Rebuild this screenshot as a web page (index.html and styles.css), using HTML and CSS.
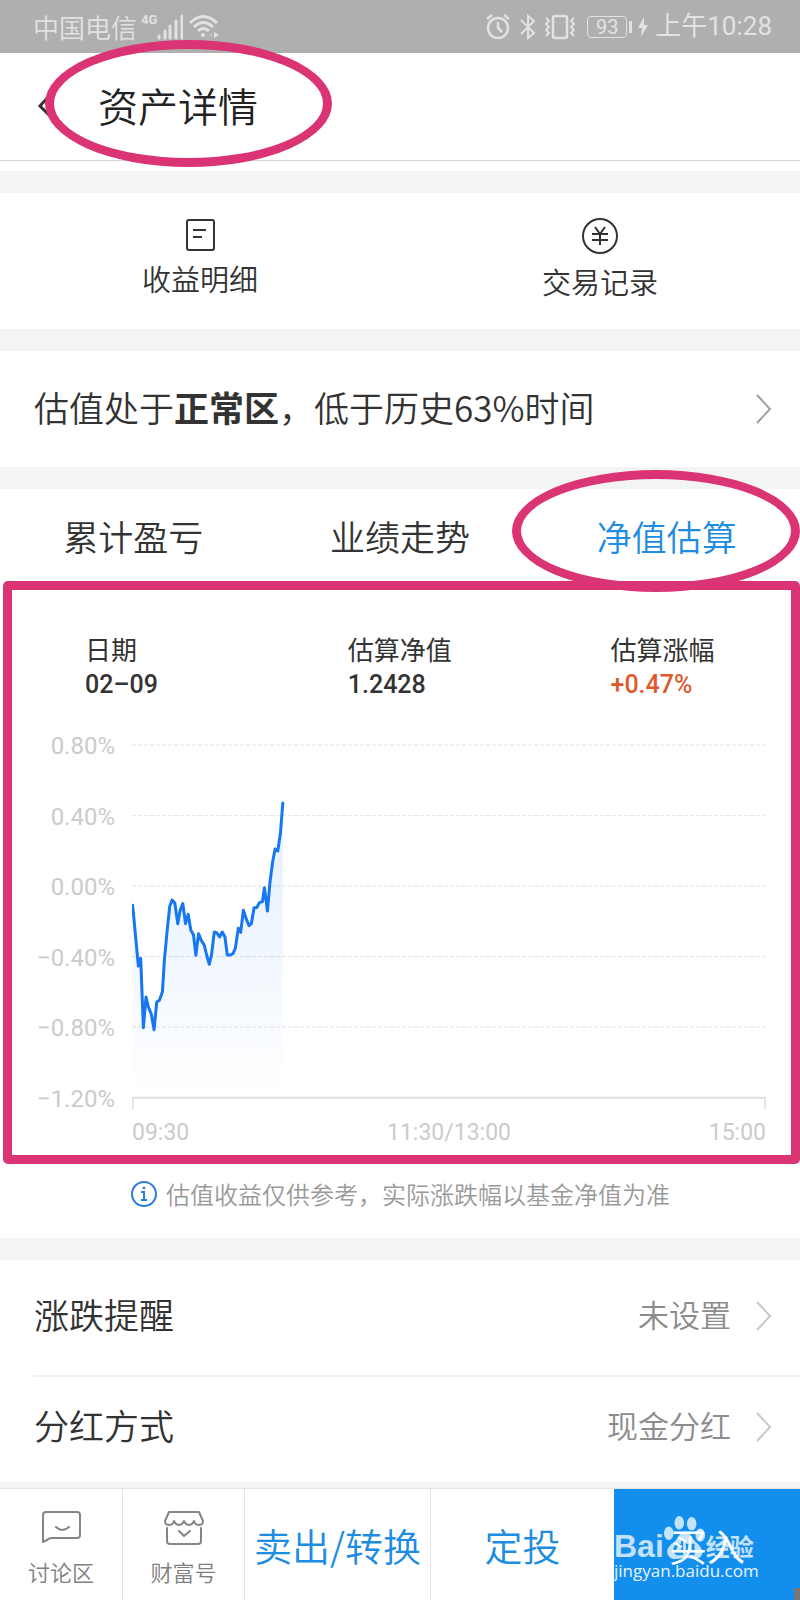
FILE: index.html
```html
<!DOCTYPE html>
<html lang="zh-CN">
<head>
<meta charset="utf-8">
<meta name="viewport" content="width=device-width, initial-scale=1">
<title>资产详情</title>
<link rel="stylesheet" href="styles.css">
</head>
<body>
<div class="status">
  <div class="status-group">
    <span class="carrier">中国电信</span>
    <span class="network">4G</span>
    <svg class="signal" width="26" height="26" viewBox="0 0 26 26" stroke="currentColor" stroke-width="3" stroke-linecap="round"><path d="M2 22v2M8 17v7M13 12v12M19 7v17M25 2v22"/></svg>
    <svg class="wifi" width="30" height="26" viewBox="0 0 30 26" fill="none" stroke="currentColor" stroke-width="3"><path d="M1 9Q14 -4 28 9M5 13Q14 4 24 13M9 17Q14 12 20 17"/><circle cx="14" cy="21" r="2" fill="currentColor" stroke="none"/><path d="M25 18v6l5-3z" fill="currentColor" stroke="none"/><path d="M23 19v4l-3-2z" fill="#c6c6c6" stroke="none"/></svg>
  </div>
  <div class="status-group">
    <svg class="alarm" width="24" height="26" viewBox="0 0 24 26" fill="none" stroke="currentColor" stroke-width="2.5"><circle cx="12" cy="14" r="10"/><path d="M1 5l5-4M23 5l-5-4M12 8v6l4 4"/></svg>
    <svg class="bluetooth" width="16" height="26" viewBox="0 0 16 26" fill="none" stroke="currentColor" stroke-width="2"><path d="M1 6l13 13-6 5V2l6 5L1 20"/></svg>
    <svg class="vibrate" width="32" height="26" viewBox="0 0 32 26" fill="none" stroke="currentColor" stroke-width="2.5"><rect x="9" y="2" width="14" height="22" rx="2"/><path stroke-width="2" d="M2 4l3 3-3 3 3 3-3 3 3 3-3 3M30 4l-3 3 3 3-3 3 3 3-3 3 3 3"/></svg>
    <span class="battery">93</span>
    <span class="battery-tip"></span>
    <svg class="bolt" width="10" height="22" viewBox="0 0 10 22" fill="currentColor"><path d="M6 1L0 12h4L3 21l7-12H6z"/></svg>
    <span class="clock">上午10:28</span>
  </div>
</div>

<header class="header">
  <button class="back" type="button" aria-label="返回"><svg width="18" height="28" viewBox="0 0 18 28" fill="none" stroke="#333" stroke-width="3"><path d="M15 3L4 15l11 11"/></svg></button>
  <h1 class="title">资产详情</h1>
  <span class="mark mark-title"></span>
</header>

<nav class="shortcuts">
  <a class="shortcut" href="#income">
    <svg width="36" height="36" viewBox="0 0 36 36" fill="none" stroke="#333" stroke-width="2"><rect x="5" y="2" width="27" height="30" rx="2"/><path d="M11 12h13M11 19h9"/></svg>
    <span>收益明细</span>
  </a>
  <a class="shortcut shortcut-low" href="#records">
    <svg width="36" height="36" viewBox="0 0 36 36" fill="none" stroke="#333" stroke-width="2"><circle cx="18" cy="18" r="17"/><path d="M13 9l5 7 5-7M10 16h16M10 22h16M18 16v11"/></svg>
    <span>交易记录</span>
  </a>
</nav>

<a class="row row-valuation" href="#valuation">
  <span class="label">估值处于<b>正常区</b>，低于历史63%时间</span>
  <svg class="chevron chevron-dark" width="18" height="30" viewBox="0 0 18 30"><path d="M2 1l13 14L2 29"/></svg>
</a>

<section class="estimate">
  <div class="tabs" role="tablist">
    <button class="tab" type="button" role="tab">累计盈亏</button>
    <button class="tab" type="button" role="tab">业绩走势</button>
    <button class="tab tab-active" type="button" role="tab" aria-selected="true">净值估算<span class="mark mark-tab"></span></button>
  </div>
  <div class="panel">
    <dl class="facts">
      <div><dt>日期</dt><dd>02–09</dd></div>
      <div><dt>估算净值</dt><dd>1.2428</dd></div>
      <div><dt>估算涨幅</dt><dd class="up">+0.47%</dd></div>
    </dl>
    <div class="chart">
      <div class="y-axis"><span>0.80%</span><span>0.40%</span><span>0.00%</span><span>−0.40%</span><span>−0.80%</span><span>−1.20%</span></div>
      <svg class="plot" viewBox="0 0 1896 1098" preserveAspectRatio="none" fill="none">
        <defs><linearGradient id="fade" x1="0" y1="0" x2="0" y2="1"><stop offset="0" stop-color="#1677f0" stop-opacity=".12"/><stop offset="1" stop-color="#1677f0" stop-opacity="0"/></linearGradient></defs>
        <path class="grid" d="M0 3H1893M0 215H1893M0 426H1893M0 638H1893M0 849H1893"/>
        <path class="axis" d="M2 1095V1061H1894V1095"/>
        <g transform="translate(-96 111)">
          <path fill="url(#fade)" d="M98 373L115 555 122 532 130 740 138 648 145 678 154 700 162 746 170 663 178 658 187 632 193 535 202 440 209 375 216 357 224 366 233 428 240 388 248 368 256 428 264 400 272 448 280 462 287 523 295 458 303 478 312 492 320 525 327 550 334 520 342 453 350 456 358 468 366 453 374 468 381 522 390 522 398 518 405 502 414 442 421 454 429 388 437 412 446 434 453 428 461 380 469 380 477 365 486 362 492 320 501 390 509 300 517 240 524 204 532 210 540 155 547 66V948H98Z"/>
          <path class="line" d="M98 373L115 555 122 532 130 740 138 648 145 678 154 700 162 746 170 663 178 658 187 632 193 535 202 440 209 375 216 357 224 366 233 428 240 388 248 368 256 428 264 400 272 448 280 462 287 523 295 458 303 478 312 492 320 525 327 550 334 520 342 453 350 456 358 468 366 453 374 468 381 522 390 522 398 518 405 502 414 442 421 454 429 388 437 412 446 434 453 428 461 380 469 380 477 365 486 362 492 320 501 390 509 300 517 240 524 204 532 210 540 155 547 66"/>
        </g>
      </svg>
      <div class="x-axis"><span>09:30</span><span>11:30/13:00</span><span>15:00</span></div>
    </div>
  </div>
  <p class="note">
    <svg width="28" height="28" viewBox="0 0 28 28" fill="none" stroke="#2b7de0" stroke-width="2"><circle cx="14" cy="14" r="12"/><path d="M11 12h3v8M11 20h6"/><circle cx="14" cy="8" r="1" fill="#2b7de0" stroke-width="1"/></svg>
    <span>估值收益仅供参考，实际涨跌幅以基金净值为准</span>
  </p>
</section>

<div class="settings">
  <a class="row" href="#alert">
    <span class="label">涨跌提醒</span><span class="value">未设置</span>
    <svg class="chevron" width="18" height="30" viewBox="0 0 18 30"><path d="M2 1l13 14L2 29"/></svg>
  </a>
  <a class="row" href="#dividend">
    <span class="label">分红方式</span><span class="value">现金分红</span>
    <svg class="chevron" width="18" height="30" viewBox="0 0 18 30"><path d="M2 1l13 14L2 29"/></svg>
  </a>
</div>

<footer class="actions">
  <a class="action action-small" href="#forum">
    <svg width="40" height="36" viewBox="0 0 40 36" fill="none" stroke="#858585" stroke-width="2" stroke-linejoin="round" stroke-linecap="round"><path d="M2 33V6q0-3 3-3h31q3 0 3 3v20q0 3-3 3H11q-3 0-5 2zM15 18q6 6 13 0"/></svg>
    <span>讨论区</span>
  </a>
  <a class="action action-small" href="#wealth">
    <svg width="40" height="36" viewBox="0 0 40 36" fill="none" stroke="#858585" stroke-width="2" stroke-linejoin="round" stroke-linecap="round"><path d="M5 3h30l4 9q0 4-4 4-4 0-5-4-2 4-5 4t-5-4q-2 4-5 4t-5-4q-1 4-5 4-4 0-4-4zM3 19v13q0 3 3 3h28q3 0 3-3V19M15 22l5 5 6-5"/></svg>
    <span>财富号</span>
  </a>
  <button class="action action-main" type="button">卖出/转换</button>
  <button class="action action-main" type="button">定投</button>
  <button class="action action-main action-buy" type="button">买入
    <span class="watermark">
      <span class="brand"><span class="brand-bai">Bai</span><svg width="42" height="46" viewBox="0 0 44 48" fill="currentColor"><ellipse cx="5" cy="19" rx="5" ry="7"/><ellipse cx="16" cy="8" rx="5" ry="7"/><ellipse cx="29" cy="9" rx="5" ry="7"/><ellipse cx="38" cy="21" rx="5" ry="7"/><path fill-rule="evenodd" d="M22 18c-6 0-7 6-11 10-6 4-10 9-6 15 4 5 11 2 17 2s12 3 16-1c5-5 1-11-5-16-4-4-5-10-11-10zM14 30h4v-3h2v15h-6q-4-1-4-6t4-6zm1 3q-2 0-2 3t2 3h3v-6zM23 30h3v8h3v-8h3v12h-6q-3 0-3-3z"/></svg><span class="brand-jingyan">经验</span></span>
      <span class="site">jingyan.baidu.com</span>
    </span>
    <span class="corner"></span>
  </button>
</footer>
</body>
</html>
```
FILE: styles.css
```css
* { box-sizing: border-box; }

body {
  margin: 0;
  background: #f4f4f4;
  color: #333;
  font-family: "Noto Sans CJK SC", sans-serif;
  font-weight: 350;
}

a { color: inherit; text-decoration: none; }

button {
  border: 0;
  padding: 0;
  background: none;
  color: inherit;
  font: inherit;
}

svg { display: block; flex: none; }

.status {
  display: flex;
  justify-content: space-between;
  height: 53px;
  padding: 0 28px 0 33px;
  background: #afafaf;
  color: #e2e2e2;
  font-size: 26px;
  line-height: 53px;
}

.status-group { display: flex; align-items: center; }
.network { margin: 0 0 14px 4px; font: bold 13px/14px Roboto, sans-serif; }
.wifi { margin-left: 6px; }
.bluetooth { margin-left: 10px; }
.vibrate { margin-left: 8px; }

.battery {
  width: 40px;
  margin-left: 11px;
  border: 1px solid currentColor;
  border-radius: 4px;
  font: 20px/20px Roboto, sans-serif;
  text-align: center;
}

.battery-tip { width: 3px; height: 12px; margin-left: 2px; background: currentColor; }
.bolt { margin-left: 6px; }
.clock { margin-left: 7px; font-family: Roboto, "Noto Sans CJK SC", sans-serif; font-weight: 400; }

.header {
  position: relative;
  display: flex;
  align-items: center;
  height: 118px;
  padding: 0 36px 15px;
  background: linear-gradient(#d4d4d4, #d4d4d4) 0 107px / 100% 1px no-repeat #fff;
}

.title {
  margin: 0 0 0 44px;
  color: #222;
  font-size: 40px;
  font-weight: 350;
  line-height: 60px;
}

.mark { position: absolute; border: 9px solid #db3474; border-radius: 50%; }
.mark-title { top: -13px; left: 45px; width: 287px; height: 127px; }
.mark-tab { z-index: 1; top: -19px; right: 0; bottom: -11px; left: -21px; }

.shortcuts { display: flex; margin-top: 22px; background: #fff; }

.shortcut {
  display: flex;
  flex: 1;
  flex-direction: column;
  align-items: center;
  gap: 4px;
  height: 136px;
  padding-top: 25px;
  font-size: 29px;
  line-height: 40px;
}

.shortcut-low { gap: 7px; }

.row {
  display: flex;
  align-items: center;
  height: 115px;
  padding: 0 27px 3px 34px;
  background: #fff;
}

.row-valuation { height: 116px; margin-top: 22px; padding-bottom: 0; }
.label { flex: 1; padding-bottom: 4px; font-size: 35px; line-height: 52px; }
.value { margin-right: 24px; padding-bottom: 4px; color: #8c8c8c; font-size: 31px; line-height: 46px; }
.chevron { fill: none; stroke: #c8c8c8; stroke-width: 2; }
.chevron-dark { stroke: #a0a0a0; }

.estimate { margin-top: 22px; background: #fff; }
.tabs { display: grid; grid-template-columns: repeat(3, 1fr); }
.tab { position: relative; height: 92px; padding-top: 2px; font-size: 35px; line-height: 52px; }
.tab-active { color: #1e8ce0; }

.panel {
  margin-left: 3px;
  padding: 41px 25px 8px 14px;
  border: 9px solid #db3474;
  border-radius: 5px;
}

.facts {
  display: grid;
  grid-template-columns: 262fr 262fr 155fr;
  margin: 0 0 41px 59px;
  font-size: 26px;
  font-weight: 400;
  line-height: 36px;
}

.facts dd { margin: 0; font-family: Roboto, sans-serif; font-weight: 500; font-size: 25px; }
.facts .up { color: #e0592a; }

.chart {
  display: grid;
  grid-template-columns: 89px 1fr;
  column-gap: 17px;
  color: #cbcbcb;
  font: 23px/28px Roboto, sans-serif;
}

.y-axis {
  display: flex;
  flex-direction: column;
  justify-content: space-between;
  height: 381px;
  margin: -12px 0;
  font-size: 24px;
  text-align: right;
}

.plot { width: 100%; height: 366px; }
.plot path { vector-effect: non-scaling-stroke; }
.grid { stroke: #e2e2e2; stroke-dasharray: 4 2; }
.axis { stroke: #e0e0e0; stroke-width: 2; }
.line { stroke: #1677f0; stroke-width: 3; stroke-linejoin: round; stroke-linecap: round; }

.x-axis {
  display: flex;
  grid-column: 2;
  justify-content: space-between;
  margin-top: 9px;
}

.note {
  display: flex;
  justify-content: center;
  align-items: center;
  gap: 8px;
  margin: 0;
  padding: 12px 0 26px;
  color: #999;
  font-size: 24px;
  line-height: 36px;
}

.settings { margin-top: 22px; background: #fff; }
.settings .row + .row { height: 107px; background: linear-gradient(#f2f2f2, #f2f2f2) 34px 0 / 100% 2px no-repeat #fff; }

.actions {
  display: grid;
  grid-template-columns: 122fr 122fr 186fr 184fr 186fr;
  height: 112px;
  margin-top: 6px;
  border-top: 1px solid #e4e4e4;
  background: #fff;
}

.action + .action { border-left: 1px solid #e4e4e4; }

.action-small {
  display: flex;
  flex-direction: column;
  align-items: center;
  gap: 11px;
  padding-top: 20px;
  color: #808080;
  font-size: 22px;
  line-height: 30px;
}

.action-main { color: #1e8ce0; font-size: 38px; line-height: 54px; }
.action + .action-buy { position: relative; border: 0; background: #128eec; color: #fff; }

.watermark {
  position: absolute;
  top: 26px;
  left: 0;
  color: rgba(255, 255, 255, .75);
  text-align: left;
}

.brand { display: flex; align-items: flex-end; height: 46px; }
.brand-bai { font: bold 32px/30px "Liberation Sans", sans-serif; }
.brand-jingyan { font-size: 24px; font-weight: 700; line-height: 30px; }
.site { display: block; font: 17px/20px "Open Sans", sans-serif; color: #e8f4ff; }
.corner { position: absolute; right: 0; bottom: 0; width: 6px; height: 12px; background: #777; }
```
